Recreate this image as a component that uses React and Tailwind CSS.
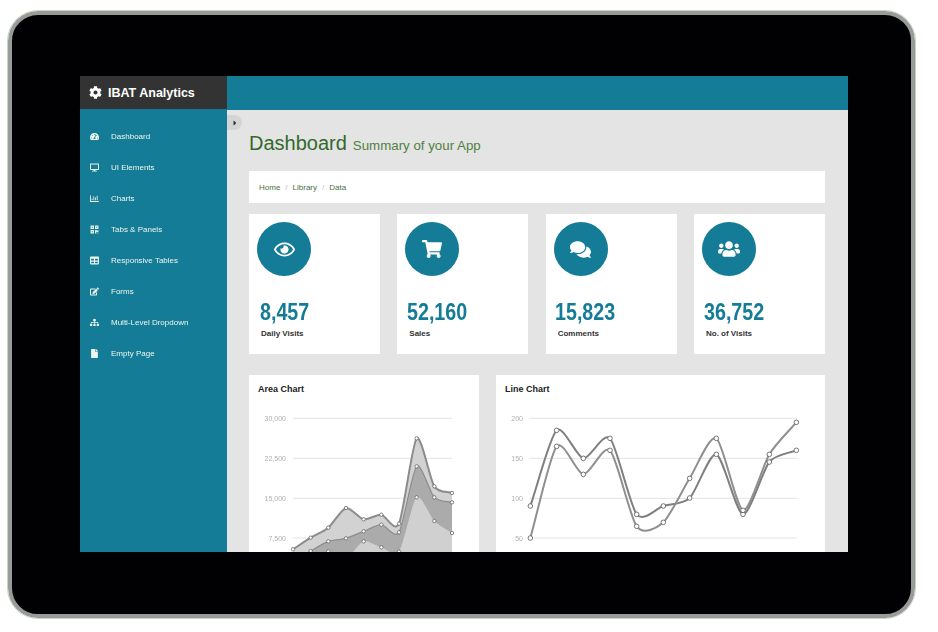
import {
  FaCog,
  FaTachometerAlt,
  FaDesktop,
  FaRegChartBar,
  FaTable,
  FaQrcode,
  FaEdit,
  FaSitemap,
  FaFile,
  FaRegEye,
  FaShoppingCart,
  FaComments,
  FaUsers,
  FaCaretRight,
} from "react-icons/fa";

const sidebarLinks = [
  { label: "Dashboard", icon: FaTachometerAlt },
  { label: "UI Elements", icon: FaDesktop },
  { label: "Charts", icon: FaRegChartBar },
  { label: "Tabs & Panels", icon: FaQrcode },
  { label: "Responsive Tables", icon: FaTable },
  { label: "Forms", icon: FaEdit },
  { label: "Multi-Level Dropdown", icon: FaSitemap },
  { label: "Empty Page", icon: FaFile },
];

const stats = [
  { value: "8,457", label: "Daily Visits", icon: FaRegEye, size: 21, numPad: "pl-[3px]" },
  { value: "52,160", label: "Sales", icon: FaShoppingCart, size: 20, numPad: "pl-[2px]" },
  { value: "15,823", label: "Comments", icon: FaComments, size: 21, numPad: "pl-[1px]" },
  { value: "36,752", label: "No. of Visits", icon: FaUsers, size: 22, numPad: "pl-[2px]" },
];

// points below are read off the screenshot at 3x, so scale them back to page pixels
const toPage = (ox, oy) => ([x, y]) => [ox + x / 3, oy + y / 3];

// same bezier as morris.js, gradient from the neighbours
function smoothPath(pts) {
  const grad = (i) => {
    const a = pts[Math.max(i - 1, 0)];
    const b = pts[Math.min(i + 1, pts.length - 1)];
    return (b[1] - a[1]) / (b[0] - a[0]);
  };
  let d = `M${pts[0][0]},${pts[0][1]}`;
  for (let i = 1; i < pts.length; i++) {
    const p = pts[i - 1];
    const c = pts[i];
    const ix = (c[0] - p[0]) / 4;
    d += `C${p[0] + ix},${p[1] + ix * grad(i - 1)} ${c[0] - ix},${c[1] - ix * grad(i)} ${c[0]},${c[1]}`;
  }
  return d;
}

const areaPt = toPage(240, 370);
const areaTop = [[159, 538], [212, 503], [265, 473], [318, 414], [371, 448], [424, 434], [477, 461], [530, 205], [583, 349], [636, 369]].map(areaPt);
const areaMid = [[159, 575], [212, 543], [265, 514], [318, 505], [371, 484], [424, 464], [477, 487], [530, 289], [583, 382], [636, 397]].map(areaPt);
const areaLow = [[159, 610], [212, 590], [265, 544], [318, 565], [371, 514], [424, 532], [477, 545], [530, 382], [583, 453], [636, 489]].map(areaPt);

const linePt = toPage(490, 370);
const lineA = [[121, 408], [200, 181], [280, 265], [360, 205], [440, 433], [520, 408], [599, 384], [679, 253], [759, 433], [838, 276], [919, 241]].map(linePt);
const lineB = [[121, 504], [200, 229], [280, 313], [360, 241], [440, 469], [520, 457], [599, 325], [679, 205], [759, 421], [838, 253], [919, 157]].map(linePt);

const gridY = [418.3, 458.3, 498.3, 538];

function Grid({ labels, x1, x2 }) {
  return (
    <g>
      {labels.map((label, i) => (
        <g key={label}>
          <line x1={x1} x2={x2} y1={gridY[i]} y2={gridY[i]} stroke="#e3e3e3" strokeWidth="1" />
          <text x={x1 - 7} y={gridY[i] + 2.5} textAnchor="end" fontSize="7" fill="#b0b0b0">
            {label}
          </text>
        </g>
      ))}
    </g>
  );
}

function Dots({ pts, r, width }) {
  return pts.map(([x, y], i) => (
    <circle key={i} cx={x} cy={y} r={r} fill="#ffffff" stroke="#666666" strokeWidth={width} />
  ));
}

function AreaChart() {
  const base = 620;
  const fill = (pts) => `${smoothPath(pts)}L${pts[pts.length - 1][0]},${base}L${pts[0][0]},${base}Z`;
  return (
    <svg viewBox="249 400 230 152" className="block w-[230px] h-[152px] blur-[0.3px]">
      <Grid labels={["30,000", "22,500", "15,000", "7,500"]} x1={293} x2={452} />
      <path d={fill(areaTop)} fill="#d2d2d2" />
      <path d={fill(areaMid)} fill="#ababab" />
      <path d={fill(areaLow)} fill="#d0d0d0" />
      <path d={smoothPath(areaTop)} fill="none" stroke="#8c8c8c" strokeWidth="2" />
      <path d={smoothPath(areaMid)} fill="none" stroke="#8c8c8c" strokeWidth="1.2" />
      <Dots pts={areaTop} r={1.7} width={0.8} />
      <Dots pts={areaMid} r={1.7} width={0.8} />
      <Dots pts={areaLow} r={1.7} width={0.8} />
    </svg>
  );
}

function LineChart() {
  return (
    <svg viewBox="496 400 329 152" className="block w-[329px] h-[152px] blur-[0.3px]">
      <Grid labels={["200", "150", "100", "50"]} x1={530} x2={797} />
      <path d={smoothPath(lineA)} fill="none" stroke="#7f7f7f" strokeWidth="2" />
      <path d={smoothPath(lineB)} fill="none" stroke="#8f8f8f" strokeWidth="2" />
      <Dots pts={lineA} r={2.3} width={0.9} />
      <Dots pts={lineB} r={2.3} width={0.9} />
    </svg>
  );
}

export default function App() {
  return (
    <div className="w-[938px] h-[632px] bg-white pl-2 pt-[11px] font-['Liberation_Sans',Arial,sans-serif] overflow-hidden">
      {/* tablet frame */}
      <div className="w-[907px] h-[607px] rounded-[30px] border-[4px] border-[#9a9a9a] bg-[#010104] pl-[68px] pt-[61px] outline outline-1 outline-[#c4d8c0]">
        {/* screen */}
        <div className="w-[768px] h-[476px] overflow-hidden flex bg-[#e4e4e4]">
          {/* sidebar */}
          <aside className="w-[147px] shrink-0 h-full bg-[#147c96]">
            <div className="h-[33px] bg-[#333333] flex items-center pl-[9px] gap-[6px] text-white">
              <FaCog className="text-[13px]" />
              <span className="pt-[2px] text-[12.5px] font-bold leading-none">IBAT Analytics</span>
            </div>
            <ul className="pt-[12px] blur-[0.5px]">
              {sidebarLinks.map(({ label, icon: Icon }) => (
                <li key={label} className="h-[31px] flex items-center pl-[10px] text-[#eef6ee]">
                  <span className="w-[21px] shrink-0">
                    <Icon className="text-[9px]" />
                  </span>
                  <span className="text-[8px] leading-none whitespace-nowrap">{label}</span>
                </li>
              ))}
            </ul>
          </aside>

          <div className="flex-1 min-w-0">
            <div className="h-[34px] bg-[#147c96]" />

            <main className="relative pl-[22px] pr-[23px]">
              {/* sidebar toggle */}
              <button className="absolute left-0 top-[5px] w-[15px] h-[15px] rounded-r-full bg-[#d4d4d4] flex items-center justify-center text-[#333333]">
                <FaCaretRight className="text-[8px]" />
              </button>

              <div className="pt-[21px] h-[61px] flex items-baseline gap-[6px] text-[#33692b]">
                <h1 className="text-[20px] leading-[24px]">Dashboard</h1>
                <span className="text-[13.3px] leading-[24px] text-[#4f8240]">Summary of your App</span>
              </div>

              <div className="h-[32px] bg-white flex items-center pl-[10px] pt-[1px] gap-[5px] text-[8px] text-[#4a6f42]">
                <span>Home</span>
                <span className="text-[#bbbbbb]">/</span>
                <span>Library</span>
                <span className="text-[#bbbbbb]">/</span>
                <span>Data</span>
              </div>

              <div className="mt-[11px] grid grid-cols-4 gap-x-[17.33px]">
                {stats.map(({ value, label, icon: Icon, size, numPad }) => (
                  <div key={label} className="h-[140px] bg-white pt-2 pl-2">
                    <div className="w-[54px] h-[54px] rounded-full bg-[#147c96] flex items-center justify-center text-white">
                      <Icon style={{ fontSize: size }} />
                    </div>
                    <div className={`mt-[21px] ${numPad} text-[24px] leading-[29px] font-bold text-[#147c96]`}>
                      <span className="inline-block origin-left scale-x-[0.82]">{value}</span>
                    </div>
                    <div className="mt-[2px] pl-1 text-[8px] leading-[12px] font-bold text-[#333333]">{label}</div>
                  </div>
                ))}
              </div>

              <div className="mt-[21px] flex gap-[17px]">
                <section className="w-[230px] h-[200px] bg-white">
                  <h3 className="pl-[9px] pt-2 h-[25px] text-[9px] leading-[12px] font-bold text-[#222222]">Area Chart</h3>
                  <AreaChart />
                </section>
                <section className="w-[329px] h-[200px] bg-white">
                  <h3 className="pl-[9px] pt-2 h-[25px] text-[9px] leading-[12px] font-bold text-[#222222]">Line Chart</h3>
                  <LineChart />
                </section>
              </div>
            </main>
          </div>
        </div>
      </div>
    </div>
  );
}
